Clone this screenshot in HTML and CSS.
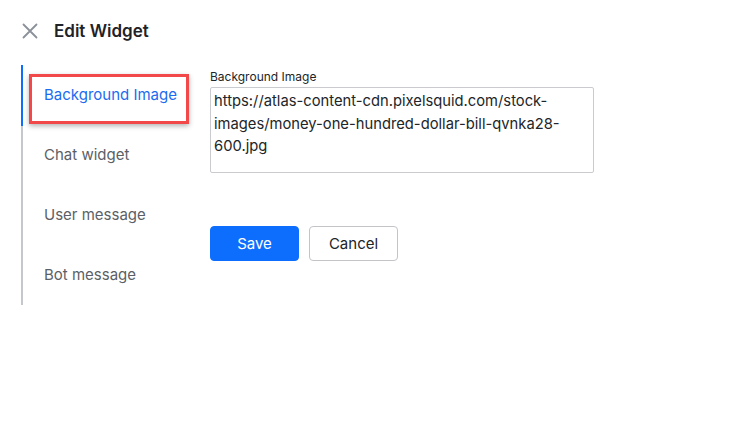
FILE: index.html
```html
<!DOCTYPE html>
<html>
<head>
<meta charset="utf-8">
<link rel="stylesheet" href="styles.css">
</head>
<body>
<div class="header">
  <svg class="close" width="16" height="16" viewBox="0 0 16 16"><path d="M1.5 1.5L14.5 14.5M14.5 1.5L1.5 14.5" stroke="#8b9099" stroke-width="1.8" fill="none" stroke-linecap="round"/></svg>
  <span class="title">Edit Widget</span>
</div>
<div class="main">
  <div class="tabs">
    <div class="tab active"><span>Background Image</span><i class="mark"></i></div>
    <div class="tab">Chat widget</div>
    <div class="tab">User message</div>
    <div class="tab">Bot message</div>
  </div>
  <div class="panel">
    <label class="label">Background Image</label>
    <div class="textarea">https://atlas-content-cdn.pixelsquid.com/stock-images/money-one-hundred-dollar-bill-qvnka28-600.jpg</div>
    <div class="actions">
      <button class="btn primary">Save</button>
      <button class="btn secondary">Cancel</button>
    </div>
  </div>
</div>
</body>
</html>
```
FILE: styles.css
```css
* { box-sizing: border-box; }
html, body { margin: 0; padding: 0; background: #fff; }
body { font-family: Inter, "Noto Sans", sans-serif; color: #212529; width: 756px; height: 433px; overflow: hidden; }
.header { display: flex; align-items: center; height: 40px; padding: 22px 0 0 22px; }
.close { display: block; }
.title { margin-left: 16px; font-size: 17px; font-weight: 600; color: #1f2328; }
.main { display: flex; padding: 25px 0 0 21px; }
.tabs { width: 189px; border-left: 2px solid #c4c7cc; display: flex; flex-direction: column; }
.tab { height: 60px; display: flex; align-items: center; padding: 0 0 2px 21px; font-size: 15px; color: #5b5f66; position: relative; }
.tab.active { color: #1a6cf0; }
.tab.active::before { content: ""; position: absolute; left: -2px; top: 0; width: 2px; height: 61px; background: #0d6efd; }
.mark { position: absolute; left: 6px; top: 9px; width: 160px; height: 50px; border: 3px solid #f2484a; box-shadow: 0 2px 5px rgba(0,0,0,0.3); }
.panel { display: flex; flex-direction: column; padding-top: 4px; }
.label { font-size: 12px; line-height: 16px; color: #212529; }
.textarea { margin-top: 2px; width: 384px; height: 86px; border: 1px solid #c9cbce; border-radius: 2px; padding: 2px 3px; font-size: 14.75px; line-height: 22.5px; color: #212529; }
.actions { display: flex; gap: 10px; margin-top: 53px; }
.btn { font-family: inherit; font-size: 15px; height: 35px; border-radius: 4px; cursor: pointer; }
.primary { width: 89px; background: #0d6efd; color: #fff; border: 1px solid #0d6efd; }
.secondary { width: 89px; background: #fff; color: #212529; border: 1px solid #c2c4c8; }
```
